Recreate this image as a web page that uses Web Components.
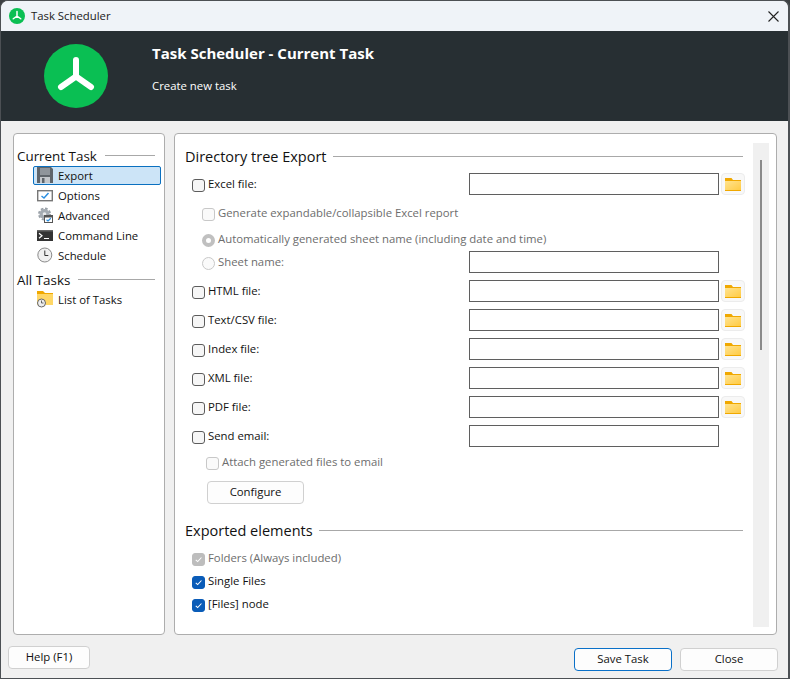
<!DOCTYPE html>
<html><head><meta charset="utf-8"><style>
html,body{margin:0;padding:0;background:#3c4043}
body{font:11.35px/16px "Open Sans","Noto Sans",sans-serif;color:#000;width:790px;height:679px;overflow:hidden}
</style></head><body>
<template id="t-window"><style>
:host{display:flex;flex-direction:column;width:790px;height:679px;box-sizing:border-box;border:1px solid #4c5054;border-right-width:2px;border-radius:8px 8px 0 0;background:#f0f0f0;overflow:hidden}
.main{flex:1;display:flex;gap:9px;padding:12px 11px 0 12px;min-height:0}
.foot{height:43px;display:flex;align-items:flex-start;padding:13px 10px 0 7px;box-sizing:border-box;gap:8px}
.sp{flex:1}
</style><slot name="title"></slot><slot name="banner"></slot>
<div class="main"><slot name="nav"></slot><slot name="content"></slot></div>
<div class="foot"><slot name="help"></slot><div class="sp"></div><slot name="actions"></slot></div></template>

<template id="t-title"><style>
:host{display:flex;align-items:center;height:30px;background:#eff3f8;padding-left:8px;font-size:11.35px;color:#1a1a1a;flex:none}
span{margin-left:6px;flex:1}
svg.x{margin-right:9px}
</style><svg width="16" height="16" viewBox="0 0 64 64"><circle cx="32" cy="32" r="32" fill="#0abf53"/><path d="M32 14V33M17 43L32 33L47 43" fill="none" stroke="#fff" stroke-width="6" stroke-linecap="round"/></svg><span><slot></slot></span>
<svg class="x" width="11" height="11" viewBox="0 0 11 11"><path d="M.5.5L10.500 10.500M10.500.5L.5 10.500" stroke="#222" stroke-width="1.100" fill="none"/></svg></template>

<template id="t-banner"><style>
:host{display:flex;height:90px;background:#272f33;color:#fff;flex:none;box-sizing:border-box;padding-left:43px}
.txt{margin-left:44px;padding-top:12px}
h1{margin:0;font-size:15px;line-height:20px;font-weight:700}
p{margin:15px 0 0;font-size:11.35px;line-height:16px}
svg{margin-top:13px}
</style><svg width="64" height="64" viewBox="0 0 64 64"><circle cx="32" cy="32" r="32" fill="#0abf53"/><path d="M32 16V32.500M17 43L32 32.500L47 43" fill="none" stroke="#fff" stroke-width="6" stroke-linecap="round"/></svg>
<div class="txt"><h1><slot name="h"></slot></h1><p><slot name="s"></slot></p></div></template>

<template id="t-panel"><style>
:host{display:block;box-sizing:border-box;height:502px;background:#fff;border:1px solid #adadad;border-radius:4px;position:relative}
</style><slot></slot></template>

<template id="t-heading"><style>
:host{display:flex;align-items:center;height:20px;font-size:14.5px;color:#111;gap:6px;margin-right:2px}
:host([small]){font-size:13.4px;margin-right:6px;gap:8px}
i{flex:1;height:1px;background:#a8a8a8;margin-top:-2px}
</style><span><slot></slot></span><i></i></template>

<template id="t-item"><style>
:host{display:flex;align-items:center;height:19px;margin-bottom:1px;box-sizing:border-box;margin-left:16px;padding-left:3px;font-size:11.35px;border:1px solid transparent;border-radius:2px;gap:4px;color:#111}
:host([selected]){background:#cce4f7;border-color:#0a70c0}
.ic{width:17px;height:17px;display:flex;flex:none}
</style><span class="ic"><slot name="icon"></slot></span><span><slot></slot></span></template>

<template id="t-check"><style>
:host{display:inline-block;width:13px;height:13px;margin-top:2px;box-sizing:border-box;flex:none;border:1px solid #5c5c5c;border-radius:3px;background:#f6f6f6}
:host([disabled]){border-color:#c8c8c8;background:#fafafa}
:host([checked]){background:#0a5cb8;border-color:#0a5cb8}
:host([checked][disabled]){background:#bdbdbd;border-color:#bdbdbd}
:host([radio]){border-radius:50%}
:host([radio][checked]){background:#fff;border:4px solid #c0c0c0}
svg{display:none;width:11px;height:11px}
:host([checked]:not([radio])) svg{display:block}
</style><svg viewBox="0 0 12 12"><path d="M3 6.300L5.100 8.300L9.200 3.800" fill="none" stroke="#fff" stroke-width="1.100"/></svg></template>

<template id="t-row"><style>
:host{display:flex;align-items:center;height:22px;font-size:11.35px;color:#111;position:relative}
:host([off]) .l{color:#6d6d6d}
.l{margin-left:3px;margin-top:0}
.sp{flex:1}
</style><slot name="c"></slot><span class="l"><slot></slot></span><span class="sp"></span><slot name="f"></slot></template>

<template id="t-field"><style>
:host{display:flex;flex:none;gap:2px;width:276px;height:22px}
i{display:block;box-sizing:border-box;width:250px;height:22px;border:1px solid #5f5f5f;background:#fff}
b{display:none;box-sizing:border-box;width:24px;height:22px;border:1px solid #ececec;border-radius:4px;background:#f8f8f8;align-items:center;justify-content:center}
:host([folder]) b{display:flex}
</style><i></i><b><svg width="16" height="13" viewBox="0 0 16 13"><defs><linearGradient id="g" x1="0" y1="0" x2="1" y2="1"><stop offset="0" stop-color="#ffe38f"/><stop offset="1" stop-color="#ffcb45"/></linearGradient></defs><path d="M0 0H6.500L8 2H16V13H0Z" fill="#f0a800"/><path d="M0 3H16V12H0Z" fill="url(#g)"/></svg></b></template>

<template id="t-btn"><style>
:host{display:inline-flex;align-items:center;justify-content:center;box-sizing:border-box;height:23px;padding-bottom:2px;background:#fdfdfd;border:1px solid #d0d0d0;border-radius:4px;font-size:11.35px;color:#111}
:host([primary]){border-color:#0a70c8}
</style><slot></slot></template>

<template id="t-scroll"><style>
:host{position:absolute;left:578px;top:9px;width:16px;height:484px;background:#f0f0f0}
i{position:absolute;left:7px;top:17px;width:2px;height:190px;background:#8a8a8a}
</style><i></i></template>

<template id="t-nav"><style>
:host{display:block;width:152px;flex:none}
.in{padding:12px 3px 0 3px}
</style><ui-panel><div class="in"><slot></slot></div></ui-panel></template>

<template id="t-content"><style>
:host{display:block;width:603px;flex:none}
.in{padding:13px 31px 0 10px;display:flex;flex-direction:column}
</style><ui-panel><ui-scroll></ui-scroll><div class="in"><slot></slot></div></ui-panel></template>

<app-window>
<title-bar slot="title">Task Scheduler</title-bar>
<top-banner slot="banner"><span slot="h">Task Scheduler - Current Task</span><span slot="s">Create new task</span></top-banner>
<nav-panel slot="nav">
<sec-heading small>Current Task</sec-heading>
<nav-item selected><svg slot="icon" width="17" height="17" viewBox="0 0 17 17"><path d="M0 0H14L16 2V16H0Z" fill="#5f656b"/><rect x="3" y="1" width="10" height="7" fill="#8f959b"/><rect x="3" y="10" width="10" height="6" fill="#c4c8cc"/><rect x="5" y="11" width="2.500" height="5" fill="#5f656b"/></svg>Export</nav-item>
<nav-item><svg slot="icon" width="17" height="17" viewBox="0 0 17 17"><rect x=".7" y="3.700" width="14.600" height="10" fill="#fff" stroke="#777" stroke-width="1.400"/><path d="M4.500 9L7 11L11.500 6" fill="none" stroke="#2b8fe0" stroke-width="1.500"/></svg>Options</nav-item>
<nav-item><svg slot="icon" width="17" height="17" viewBox="0 0 17 17"><circle cx="7.500" cy="7" r="5.500" fill="none" stroke="#9aa1a8" stroke-width="2" stroke-dasharray="2.600 1.700"/><circle cx="7.500" cy="7" r="5" fill="#a4abb2"/><circle cx="7.500" cy="7" r="1.800" fill="#e8eaec"/><rect x="7.500" y="8.500" width="8" height="7" fill="#fff" stroke="#555"/><rect x="8" y="9" width="7" height="1.500" fill="#555"/><path d="M9.500 12.800L11 14L13.800 11.200" fill="none" stroke="#2b8fe0" stroke-width="1.300"/></svg>Advanced</nav-item>
<nav-item><svg slot="icon" width="17" height="17" viewBox="0 0 17 17"><rect x="0" y="3" width="16" height="11" fill="#333"/><rect x="0" y="3" width="16" height="1.500" fill="#666"/><path d="M2 6.300L5 8.800L2 11.300" fill="none" stroke="#fff" stroke-width="1.200"/><path d="M7 11.500H12" stroke="#fff" stroke-width="1.200"/></svg>Command Line</nav-item>
<nav-item><svg slot="icon" width="17" height="17" viewBox="0 0 17 17"><circle cx="7.800" cy="8" r="7" fill="#f0f0f0" stroke="#8a8a8a"/><path d="M7.800 3.500V8.500H11.300" fill="none" stroke="#333" stroke-width="1"/></svg>Schedule</nav-item>
<sec-heading small style="margin-top:5px">All Tasks</sec-heading>
<nav-item><svg slot="icon" width="17" height="17" viewBox="0 0 17 17"><path d="M0 0H6L8 2H16V14H0Z" fill="#f0a800"/><path d="M0 3H16V14H0Z" fill="#ffd766"/><circle cx="4.500" cy="12" r="4" fill="#eee" stroke="#666"/><path d="M4.500 9.500V12H6.500" fill="none" stroke="#444" stroke-width=".8"/></svg>List of Tasks</nav-item>
</nav-panel>
<content-panel slot="content">
<sec-heading>Directory tree Export</sec-heading>
<form-row style="margin:6px 0 0 7px"><ui-check slot="c"></ui-check>Excel file:<ui-field slot="f" folder></ui-field></form-row>
<form-row off style="margin:7px 0 0 17px"><ui-check slot="c" disabled></ui-check>Generate expandable/collapsible Excel report</form-row>
<form-row off style="margin:4px 0 0 17px"><ui-check slot="c" radio checked disabled></ui-check>Automatically generated sheet name (including date and time)</form-row>
<form-row off style="margin:1px 0 0 17px"><ui-check slot="c" radio disabled></ui-check>Sheet name:<ui-field slot="f"></ui-field></form-row>
<form-row style="margin:7px 0 0 7px"><ui-check slot="c"></ui-check>HTML file:<ui-field slot="f" folder></ui-field></form-row>
<form-row style="margin:7px 0 0 7px"><ui-check slot="c"></ui-check>Text/CSV file:<ui-field slot="f" folder></ui-field></form-row>
<form-row style="margin:7px 0 0 7px"><ui-check slot="c"></ui-check>Index file:<ui-field slot="f" folder></ui-field></form-row>
<form-row style="margin:7px 0 0 7px"><ui-check slot="c"></ui-check>XML file:<ui-field slot="f" folder></ui-field></form-row>
<form-row style="margin:7px 0 0 7px"><ui-check slot="c"></ui-check>PDF file:<ui-field slot="f" folder></ui-field></form-row>
<form-row style="margin:7px 0 0 7px"><ui-check slot="c"></ui-check>Send email:<ui-field slot="f"></ui-field></form-row>
<form-row off style="margin:4px 0 0 21px"><ui-check slot="c" disabled></ui-check>Attach generated files to email</form-row>
<div style="margin:8px 0 0 22px"><ui-btn style="width:97px">Configure</ui-btn></div>
<sec-heading style="margin-top:17px">Exported elements</sec-heading>
<form-row off style="margin:6px 0 0 7px"><ui-check slot="c" checked disabled></ui-check>Folders (Always included)</form-row>
<form-row style="margin:1px 0 0 7px"><ui-check slot="c" checked></ui-check>Single Files</form-row>
<form-row style="margin:1px 0 0 7px"><ui-check slot="c" checked></ui-check>[Files] node</form-row>
</content-panel>
<ui-btn slot="help" style="width:82px;margin-top:-2px">Help (F1)</ui-btn>
<ui-btn slot="actions" primary style="width:98px">Save Task</ui-btn>
<ui-btn slot="actions" style="width:98px">Close</ui-btn>
</app-window>
<script>
const map={'app-window':'t-window','title-bar':'t-title','top-banner':'t-banner','ui-panel':'t-panel','sec-heading':'t-heading','nav-item':'t-item','ui-check':'t-check','form-row':'t-row','ui-field':'t-field','ui-btn':'t-btn','ui-scroll':'t-scroll','nav-panel':'t-nav','content-panel':'t-content'};
for(const [n,id] of Object.entries(map)){
 customElements.define(n,class extends HTMLElement{constructor(){super();this.attachShadow({mode:'open'}).appendChild(document.getElementById(id).content.cloneNode(true));}});
}
</script>
</body></html>
